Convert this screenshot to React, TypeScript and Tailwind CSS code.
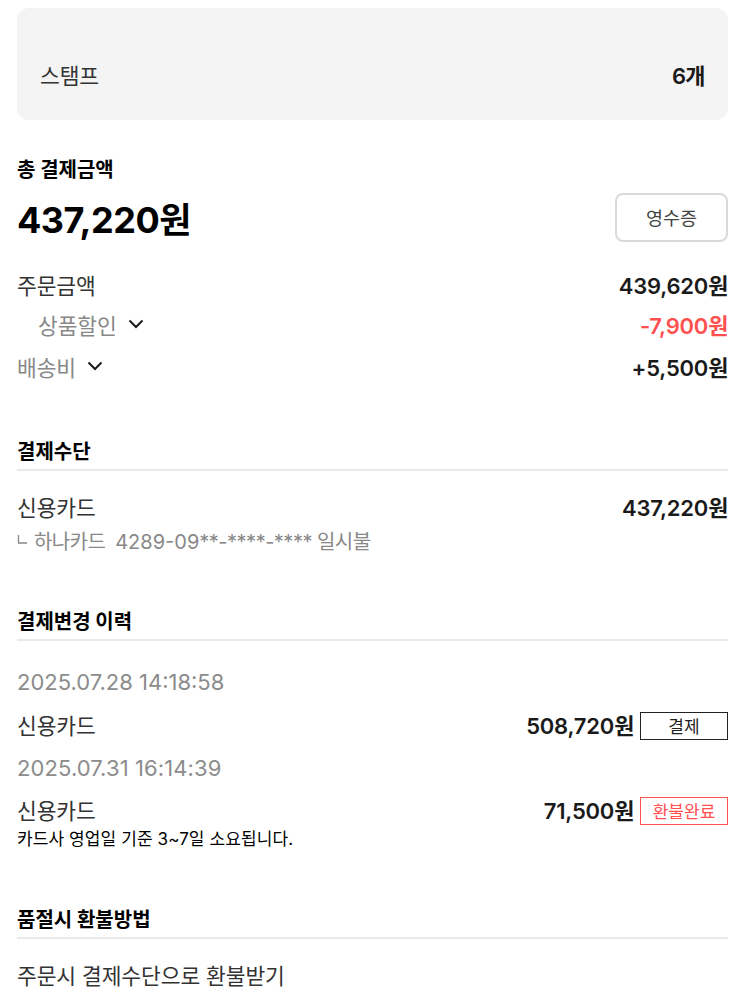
import type { ReactNode } from "react";

function Won({ amount, className = "text-[#1a1a1a]" }: { amount: string; className?: string }) {
  return (
    <span className={`text-[22px] font-semibold tracking-[-0.2px] ${className}`}>
      {amount}
      <span className="tracking-[-0.4px]">원</span>
    </span>
  );
}

function Row({ className = "", children }: { className?: string; children: ReactNode }) {
  return <div className={`flex items-center justify-between ${className}`}>{children}</div>;
}

function Label({ className = "text-[#333]", children }: { className?: string; children: ReactNode }) {
  return <span className={`pt-0.5 text-[21.5px] tracking-[-0.1px] ${className}`}>{children}</span>;
}

function Heading({ children }: { children: ReactNode }) {
  return (
    <h2 className="flex h-[37px] items-center border-b-2 border-[#e9e9e9] text-[20px] font-bold text-black">
      {children}
    </h2>
  );
}

function Chevron() {
  return (
    <svg className="mb-1 ml-[11px] h-[10px] w-4" viewBox="0 0 16 10" fill="none" stroke="#1a1a1a" strokeWidth="2">
      <path d="M1.5 1.5 8 8l6.5-6.5" />
    </svg>
  );
}

export default function App() {
  return (
    <main className="h-[1007px] overflow-hidden bg-white pr-[22px] pl-[17px] pt-2 font-['Inter','Noto_Sans_CJK_KR',sans-serif] leading-none whitespace-nowrap">
      <Row className="h-28 rounded-xl bg-[#f4f4f4] pt-6 pr-[23px] pl-[23px]">
        <Label>스탬프</Label>
        <span className="text-[22px] font-semibold tracking-[-0.6px] text-[#1a1a1a]">6개</span>
      </Row>

      <section>
        <h2 className="mt-[33px] flex h-8 items-center pt-0.5 text-[20px] font-bold text-black">총 결제금액</h2>
        <Row className="mt-2 h-12">
          <strong className="pt-1.5 text-[36px] font-bold tracking-[-0.5px] text-black">
            437,220<span className="tracking-[-1.5px] text-[35px]">원</span>
          </strong>
          <button className="h-[49px] w-[113px] rounded-lg border-2 border-[#dadada] pt-0.5 text-[18.5px] text-[#444]">영수증</button>
        </Row>
        <Row className="mt-6 h-[41px]">
          <Label>주문금액</Label>
          <Won amount="439,620" />
        </Row>
        <Row className="h-[40px]">
          <span className="flex items-center pl-[21px]">
            <Label className="text-[#888]">상품할인</Label>
            <Chevron />
          </span>
          <Won amount="-7,900" className="text-[#ff5050]" />
        </Row>
        <Row className="h-[44px]">
          <span className="flex items-center">
            <Label className="text-[#888]">배송비</Label>
            <Chevron />
          </span>
          <Won amount="+5,500" />
        </Row>
      </section>

      <section className="mt-11">
        <Heading>결제수단</Heading>
        <Row className="mt-5 h-[34px]">
          <Label>신용카드</Label>
          <Won amount="437,220" />
        </Row>
        <p className="flex h-[33px] items-center text-[20px] text-[#888]">
          <svg className="mb-1 mr-[7px] h-[9px] w-[10px]" viewBox="0 0 10 9" fill="none" stroke="#888" strokeWidth="1.3">
            <path d="M1.5 0v8H10" />
          </svg>
          <span className="tracking-[-0.6px]">하나카드</span>
          <span className="ml-[10px]">
            4289-09<span className="tracking-[-0.5px]">**-****-****</span>
          </span>
          <span className="ml-[5px] tracking-[-0.5px]">일시불</span>
        </p>
      </section>

      <section className="mt-[46px]">
        <Heading>결제변경 이력</Heading>
        <div className="mt-[19px] flex h-[43px] items-center text-[22px] text-[#8c8c8c]">2025.07.28 14:18:58</div>
        <Row className="mt-px h-[43px]">
          <Label>신용카드</Label>
          <span className="flex items-center gap-1.5">
            <Won amount="508,720" />
            <span className="flex h-7 w-[88px] items-center justify-center border-[1.5px] border-[#222] pt-1 text-[17px] text-[#222]">결제</span>
          </span>
        </Row>
        <div className="flex h-[42px] items-center text-[22px] tracking-[0.1px] text-[#8c8c8c]">2025.07.31 16:14:39</div>
        <Row className="h-[43px]">
          <Label>신용카드</Label>
          <span className="flex items-center gap-1.5">
            <Won amount="71,500" />
            <span className="flex h-7 w-[88px] items-center justify-center border-[1.5px] border-[#ff5050] pt-1 text-[17px] text-[#ff5050]">환불완료</span>
          </span>
        </Row>
        <p className="-mt-[3px] flex h-5 items-center text-[17px] tracking-[0.1px] text-black">카드사 영업일 기준 3~7일 소요됩니다.</p>
      </section>

      <section className="mt-[53px]">
        <Heading>품절시 환불방법</Heading>
        <Row className="mt-[19px] h-[35px]">
          <Label>주문시 결제수단으로 환불받기</Label>
        </Row>
      </section>
    </main>
  );
}
